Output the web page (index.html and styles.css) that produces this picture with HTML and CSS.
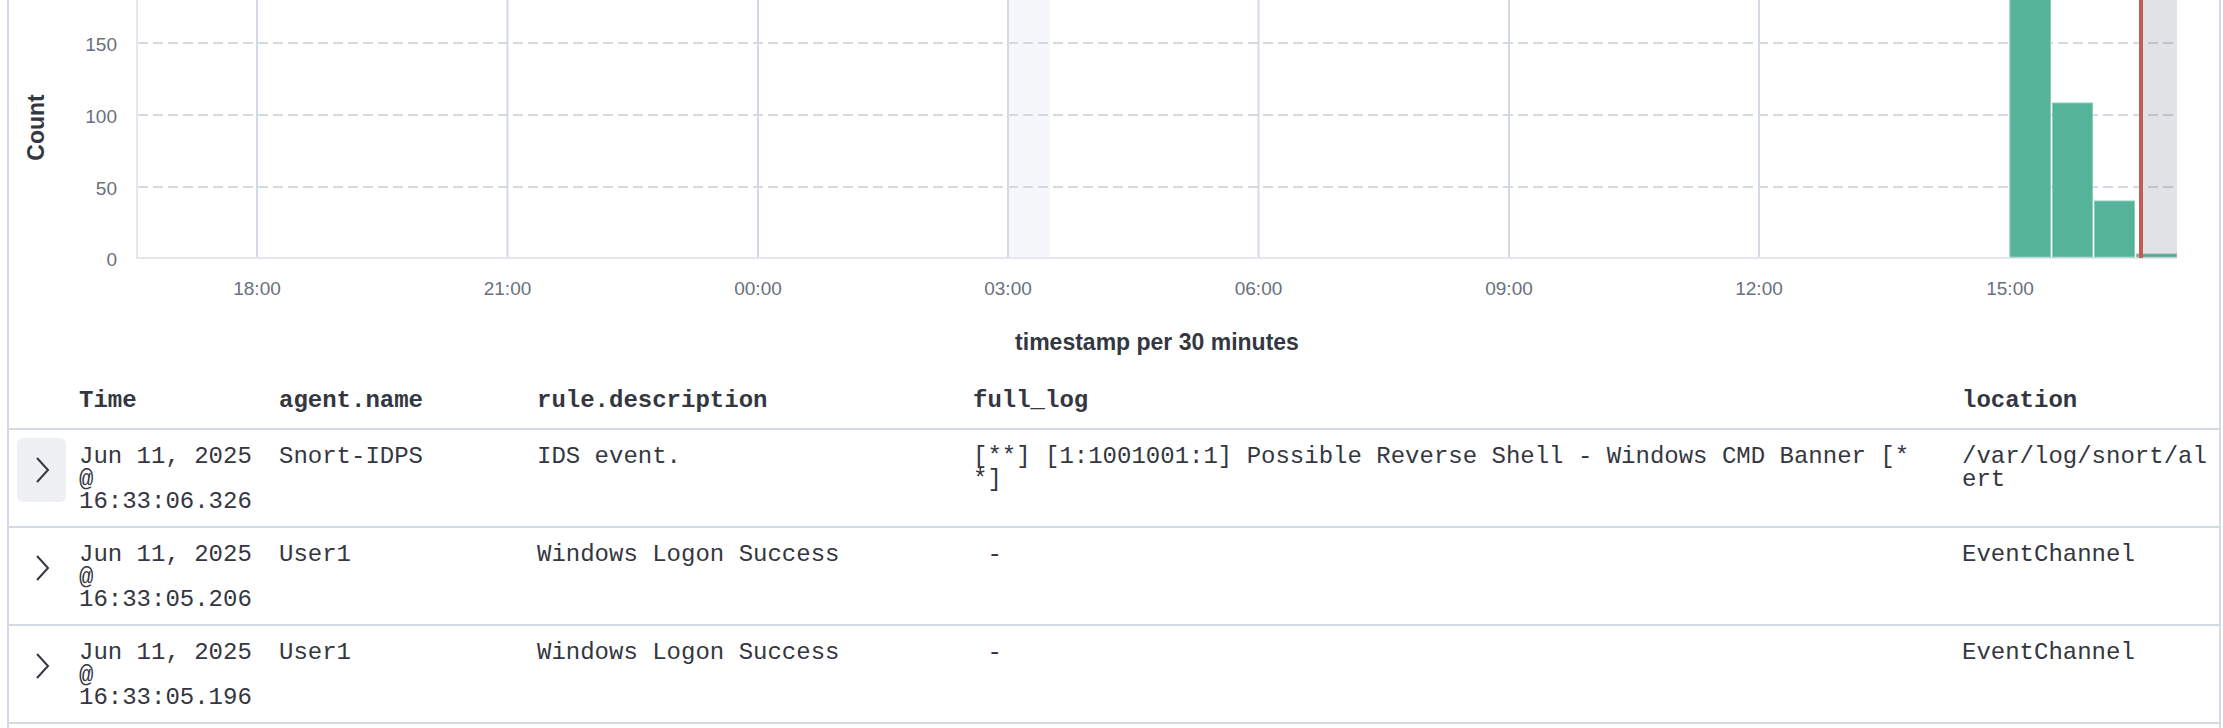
FILE: index.html
```html
<!DOCTYPE html>
<html lang="en">
<head>
<meta charset="utf-8">
<title>Discover</title>
<link rel="stylesheet" href="styles.css">
</head>
<body>
<div class="panel">
  <div class="chart">
    <svg class="chart-svg" width="2210" height="378" viewBox="9 0 2210 378" xmlns="http://www.w3.org/2000/svg">
      <text class="axis-title" transform="translate(36 127.5) rotate(-90)" text-anchor="middle" dominant-baseline="central">Count</text>
      <g class="ytick" text-anchor="end" dominant-baseline="central">
        <text x="117" y="44">150</text>
        <text x="117" y="116">100</text>
        <text x="117" y="188">50</text>
        <text x="117" y="259">0</text>
      </g>
      <rect x="1008" y="0" width="42" height="258" fill="#f5f7fa"/>
      <g class="vgrid">
        <line x1="257" y1="0" x2="257" y2="258"/>
        <line x1="507.5" y1="0" x2="507.5" y2="258"/>
        <line x1="758" y1="0" x2="758" y2="258"/>
        <line x1="1008" y1="0" x2="1008" y2="258"/>
        <line x1="1258.5" y1="0" x2="1258.5" y2="258"/>
        <line x1="1509" y1="0" x2="1509" y2="258"/>
        <line x1="1759" y1="0" x2="1759" y2="258"/>
        <line x1="2010" y1="0" x2="2010" y2="258"/>
      </g>
      <g class="hgrid">
        <line x1="138" y1="43" x2="2177" y2="43"/>
        <line x1="138" y1="115" x2="2177" y2="115"/>
        <line x1="138" y1="187" x2="2177" y2="187"/>
      </g>
      <line class="axis" x1="137" y1="0" x2="137" y2="259"/>
      <line class="axis" x1="136" y1="258" x2="2177" y2="258"/>
      <g class="bars">
        <rect x="2010" y="-2" width="40.5" height="259"/>
        <rect x="2052.5" y="103" width="40" height="154"/>
        <rect x="2094.5" y="201" width="40" height="56"/>
        <rect x="2136.5" y="254" width="40" height="3"/>
      </g>
      <rect x="2142" y="0" width="35" height="257" fill="rgba(105,112,125,0.2)"/>
      <rect x="2139" y="0" width="4" height="258" fill="#c65a54"/>
      <g class="xtick" text-anchor="middle" dominant-baseline="central">
        <text x="257" y="288">18:00</text>
        <text x="507.5" y="288">21:00</text>
        <text x="758" y="288">00:00</text>
        <text x="1008" y="288">03:00</text>
        <text x="1258.5" y="288">06:00</text>
        <text x="1509" y="288">09:00</text>
        <text x="1759" y="288">12:00</text>
        <text x="2010" y="288">15:00</text>
      </g>
      <text class="axis-title" x="1157" y="350" text-anchor="middle">timestamp per 30 minutes</text>
    </svg>
  </div>

  <div class="table">
    <div class="row head">
      <div class="cell c-exp"></div>
      <div class="cell c-time">Time</div>
      <div class="cell c-agent">agent.name</div>
      <div class="cell c-rule">rule.description</div>
      <div class="cell c-log">full_log</div>
      <div class="cell c-loc">location</div>
    </div>

    <div class="row">
      <div class="cell c-exp"><span class="expand active"><svg width="16" height="26" viewBox="0 0 16 26"><polyline points="3,1 14,13 3,25" fill="none" stroke="#343741" stroke-width="2"/></svg></span></div>
      <div class="cell c-time">Jun 11, 2025 @ 16:33:06.326</div>
      <div class="cell c-agent">Snort-IDPS</div>
      <div class="cell c-rule">IDS event.</div>
      <div class="cell c-log">[**] [1:1001001:1] Possible Reverse Shell - Windows CMD Banner [**]</div>
      <div class="cell c-loc">/var/log/snort/alert</div>
    </div>

    <div class="row">
      <div class="cell c-exp"><span class="expand"><svg width="16" height="26" viewBox="0 0 16 26"><polyline points="3,1 14,13 3,25" fill="none" stroke="#343741" stroke-width="2"/></svg></span></div>
      <div class="cell c-time">Jun 11, 2025 @ 16:33:05.206</div>
      <div class="cell c-agent">User1</div>
      <div class="cell c-rule">Windows Logon Success</div>
      <div class="cell c-log">&nbsp;-</div>
      <div class="cell c-loc">EventChannel</div>
    </div>

    <div class="row">
      <div class="cell c-exp"><span class="expand"><svg width="16" height="26" viewBox="0 0 16 26"><polyline points="3,1 14,13 3,25" fill="none" stroke="#343741" stroke-width="2"/></svg></span></div>
      <div class="cell c-time">Jun 11, 2025 @ 16:33:05.196</div>
      <div class="cell c-agent">User1</div>
      <div class="cell c-rule">Windows Logon Success</div>
      <div class="cell c-log">&nbsp;-</div>
      <div class="cell c-loc">EventChannel</div>
    </div>
    <div class="row-tail"></div>
  </div>
</div>
</body>
</html>
```

FILE: styles.css
```css
html, body {
  margin: 0;
  padding: 0;
  background: #ffffff;
  overflow: hidden;
}

.panel {
  margin-left: 7px;
  width: 2210px;
  border-left: 2px solid #d3dae6;
  border-right: 2px solid #d3dae6;
  background: #ffffff;
}

.chart {
  height: 378px;
}

.chart-svg {
  display: block;
}

.axis-title {
  font-family: "Liberation Sans", Arial, sans-serif;
  font-weight: bold;
  font-size: 23px;
  fill: #343741;
}

.ytick text,
.xtick text {
  font-family: "Liberation Sans", Arial, sans-serif;
  font-size: 19px;
  fill: #69707d;
}

.vgrid line {
  stroke: #d3dae6;
  stroke-width: 2;
}

.hgrid line {
  stroke: #d3dae6;
  stroke-width: 2;
  stroke-dasharray: 10 5;
}

.axis {
  stroke: #e4e7ec;
  stroke-width: 2;
}

.bars rect {
  fill: #54b399;
  stroke: #8ccdb8;
  stroke-width: 1;
}

.table {
  font-family: "Liberation Mono", "DejaVu Sans Mono", monospace;
  font-size: 24px;
  line-height: 22.5px;
  color: #343741;
}

.row {
  display: grid;
  grid-template-columns: 70px 200px 258px 436px 989px 257px;
  height: 98px;
  box-sizing: border-box;
  border-bottom: 2px solid #d3dae6;
  padding-top: 16px;
}

.row.head {
  height: 52px;
  padding-top: 12px;
  font-weight: bold;
}

.cell {
  min-width: 0;
}

.c-time { padding-right: 12px; }
.c-agent { padding-right: 10px; }
.c-rule { padding-right: 10px; }
.c-log { padding-right: 49px; word-break: break-all; }
.c-loc { padding-right: 7px; word-break: break-all; }

.c-exp {
  position: relative;
}

.expand {
  position: absolute;
  left: 8px;
  top: -8px;
  width: 49px;
  height: 64px;
  border-radius: 6px;
  display: flex;
  align-items: center;
  justify-content: center;
}

.expand.active {
  background: #eff0f3;
}

.row-tail {
  height: 10px;
}
```
